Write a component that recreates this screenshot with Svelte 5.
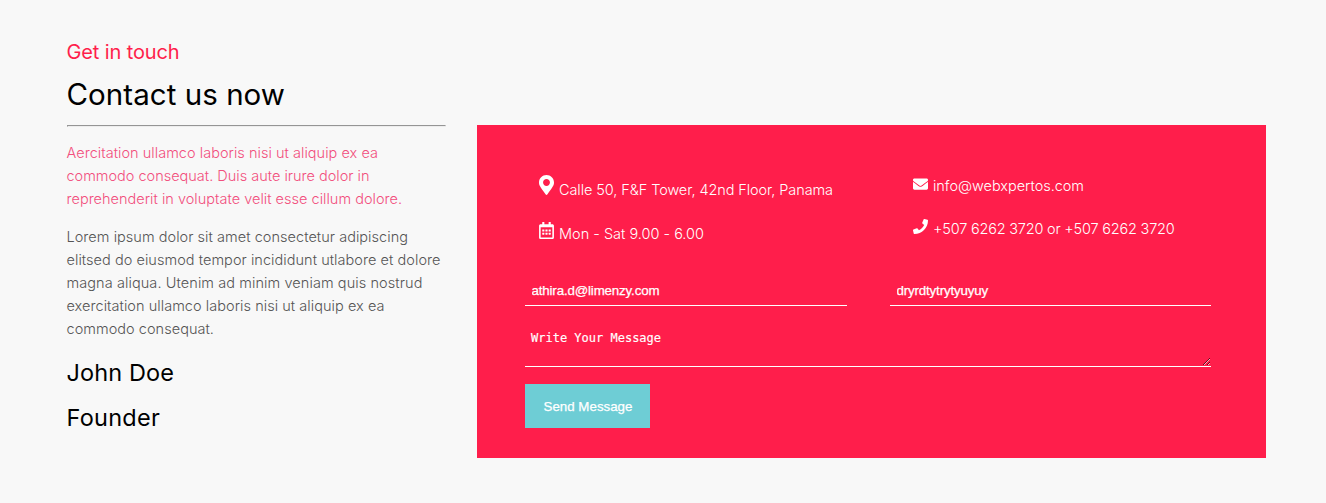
<script>
  const intro = [
    ['Aercitation ullamco laboris nisi ut aliquip ex ea', 311.5],
    ['commodo consequat. Duis aute irure dolor in', 303],
    ['reprehenderit in voluptate velit esse cillum dolore.', 335.5]
  ];
  const body = [
    ['Lorem ipsum dolor sit amet consectetur adipiscing', 341.5],
    ['elitsed do eiusmod tempor incididunt utlabore et dolore', 374],
    ['magna aliqua. Utenim ad minim veniam quis nostrud', 356],
    ['exercitation ullamco laboris nisi ut aliquip ex ea', 318],
    ['commodo consequat.', 147.5]
  ];

  // Tracks a line of text in or out so that it fills the given measure.
  function track(node, width) {
    const natural = node.getBoundingClientRect().width;
    node.style.letterSpacing = `${(width - natural) / node.textContent.length}px`;
  }
</script>

<main>
  <section class="about">
    <h4><span use:track={113}>Get in touch</span></h4>
    <h2><span use:track={218.5}>Contact us now</span></h2>
    <hr />
    <p class="intro">
      {#each intro as [text, width]}
        <span class="line"><span use:track={width}>{text}</span></span>
      {/each}
    </p>
    <p>
      {#each body as [text, width]}
        <span class="line"><span use:track={width}>{text}</span></span>
      {/each}
    </p>
    <h3><span use:track={107.5}>John Doe</span></h3>
    <h3><span use:track={93.5}>Founder</span></h3>
  </section>

  <section class="card">
    <div class="details">
      <div class="column">
        <div class="item place">
          <svg class="pin" viewBox="0 0 384 512"><path d="M172.268 501.67C26.97 291.031 0 269.413 0 192 0 85.961 85.961 0 192 0s192 85.961 192 192c0 77.413-26.97 99.031-172.268 309.67-9.535 13.774-29.93 13.773-39.464 0zM192 280c48.600 0 88-39.400 88-88s-39.400-88-88-88-88 39.400-88 88 39.400 88 88 88z" /></svg>
          <span use:track={274}>Calle 50, F&amp;F Tower, 42nd Floor, Panama</span>
        </div>
        <div class="item hours">
          <svg class="calendar" viewBox="0 0 448 512"><path d="M148 288h-40c-6.600 0-12-5.400-12-12v-40c0-6.600 5.400-12 12-12h40c6.600 0 12 5.400 12 12v40c0 6.600-5.400 12-12 12zm108-12v-40c0-6.600-5.400-12-12-12h-40c-6.600 0-12 5.400-12 12v40c0 6.600 5.400 12 12 12h40c6.600 0 12-5.400 12-12zm96 0v-40c0-6.600-5.400-12-12-12h-40c-6.600 0-12 5.400-12 12v40c0 6.600 5.400 12 12 12h40c6.600 0 12-5.400 12-12zm-96 96v-40c0-6.600-5.400-12-12-12h-40c-6.600 0-12 5.400-12 12v40c0 6.600 5.400 12 12 12h40c6.600 0 12-5.400 12-12zm-96 0v-40c0-6.600-5.400-12-12-12h-40c-6.600 0-12 5.400-12 12v40c0 6.600 5.400 12 12 12h40c6.600 0 12-5.400 12-12zm192 0v-40c0-6.600-5.400-12-12-12h-40c-6.600 0-12 5.400-12 12v40c0 6.600 5.400 12 12 12h40c6.600 0 12-5.400 12-12zm96-260v352c0 26.500-21.500 48-48 48H48c-26.500 0-48-21.500-48-48V112c0-26.500 21.500-48 48-48h48V12c0-6.600 5.400-12 12-12h40c6.600 0 12 5.400 12 12v52h128V12c0-6.600 5.400-12 12-12h40c6.600 0 12 5.400 12 12v52h48c26.500 0 48 21.500 48 48zm-48 346V160H48v298c0 3.300 2.700 6 6 6h340c3.300 0 6-2.700 6-6z" /></svg>
          <span use:track={145}>Mon - Sat 9.00 - 6.00</span>
        </div>
      </div>
      <div class="column">
        <div class="item mail">
          <svg class="envelope" viewBox="0 64 512 384"><path d="M502.300 190.800c3.900-3.100 9.700-.2 9.700 4.700V400c0 26.500-21.500 48-48 48H48c-26.500 0-48-21.500-48-48V195.600c0-5 5.700-7.800 9.700-4.700 22.400 17.400 52.100 39.500 154.100 113.600 21.100 15.400 56.700 47.800 92.200 47.600 35.700.3 72-32.800 92.300-47.600 102-74.100 131.600-96.300 154-113.700zM256 320c23.200.4 56.600-29.200 73.400-41.400 132.700-96.300 142.800-104.700 173.400-128.700 5.800-4.500 9.200-11.500 9.200-18.900v-19c0-26.500-21.500-48-48-48H48c-26.500 0-48 21.500-48 48v19c0 7.400 3.400 14.300 9.200 18.900 30.600 23.900 40.700 32.400 173.400 128.700 16.800 12.200 50.200 41.800 73.400 41.400z" /></svg>
          <span use:track={151}>info@webxpertos.com</span>
        </div>
        <div class="item call">
          <svg class="phone" viewBox="0 0 512 512"><path d="M493.400 24.600l-104-24c-11.300-2.600-22.900 3.300-27.500 13.900l-48 112c-4.200 9.800-1.400 21.300 6.900 28l60.600 49.600c-36 76.700-98.900 140.500-177.200 177.200l-49.600-60.600c-6.800-8.300-18.200-11.100-28-6.900l-112 48C3.900 366.500-2 378.100.6 389.400l24 104C27.100 504.200 36.700 512 48 512c256.100 0 464-207.500 464-464 0-11.200-7.700-20.900-18.600-23.400z" /></svg>
          <span use:track={241.5}>+507 6262 3720 or +507 6262 3720</span>
        </div>
      </div>
    </div>

    <form>
      <div class="fields">
        <input type="text" aria-label="Email" value="athira.d@limenzy.com" />
        <input type="text" aria-label="Name" value="dryrdtytrytyuyuy" />
      </div>
      <textarea placeholder="Write Your Message"></textarea>
      <button type="button">Send Message</button>
    </form>
  </section>
</main>

<style>
  :global(body) {
    margin: 0;
    background: #f8f8f8;
  }
  main {
    box-sizing: border-box;
    height: 503px;
    padding: 38px 60px 0 66.5px;
    display: flex;
    gap: 31px;
    background: #f8f8f8;
    font-family: Inter, Roboto, sans-serif;
    overflow: hidden;
  }
  .about {
    width: 379.5px;
    flex: none;
  }
  h2, h3, h4, p {
    margin: 0;
    white-space: nowrap;
    font-weight: 400;
    color: #000;
  }
  h4 {
    font-size: 20px;
    line-height: 28px;
    color: #ff1e4b;
  }
  h2 {
    margin-top: 9px;
    font-size: 29.5px;
    line-height: 38px;
  }
  hr {
    box-sizing: border-box;
    height: 2px;
    margin: 12px 0 14px;
    border: 1px solid;
    border-color: #959595 #ededed #ededed #959595;
  }
  p {
    margin-bottom: 15px;
    font-size: 14.5px;
    line-height: 23px;
    font-weight: 300;
    color: #555;
  }
  .intro {
    color: #f24f7d;
  }
  .line {
    display: block;
  }
  h3 {
    margin-bottom: 15px;
    font-size: 23.5px;
    line-height: 30px;
  }
  h3:nth-last-child(2) {
    margin-top: 18px;
  }
  .card {
    box-sizing: border-box;
    width: 789px;
    height: 333px;
    margin-top: 87px;
    padding: 48px 55px 30px 48px;
    background: #ff1e4b;
  }
  .details {
    display: grid;
    grid-template-columns: 374px 1fr;
    height: 102px;
    padding-left: 14px;
  }
  .item {
    display: flex;
    align-items: flex-start;
    gap: 5px;
    font-size: 14.5px;
    line-height: 23px;
    color: #fff;
    white-space: nowrap;
    font-weight: 300;
  }
  .place {
    padding-top: 5px;
  }
  .hours {
    padding-top: 21px;
  }
  .mail {
    padding-top: 1px;
  }
  .call {
    padding-top: 20px;
  }
  svg {
    display: block;
    flex: none;
    width: 15px;
    fill: #fff;
  }
  .pin {
    height: 20px;
    margin-top: -3px;
  }
  .calendar {
    height: 17px;
  }
  .envelope {
    height: 12px;
    margin-top: 4px;
  }
  .phone {
    height: 15px;
    margin-top: 2px;
  }
  .fields {
    display: grid;
    grid-template-columns: 322px 321px;
    gap: 43px;
  }
  input, textarea {
    box-sizing: border-box;
    width: 100%;
    border: 0;
    border-bottom: 1px solid #fff;
    border-radius: 0;
    outline: 0;
    background: transparent;
    color: #fff;
  }
  input {
    height: 31px;
    padding: 0 6px 0 6.5px;
    font: 13.333px 'Liberation Sans', Arial, sans-serif;
    letter-spacing: -0.16px;
    -webkit-text-stroke: 0.25px #fff;
  }
  textarea {
    display: block;
    height: 46px;
    margin: 15px 0 17px;
    padding: 10px 6px;
    font: 12px/14px 'DejaVu Sans Mono', monospace;
    -webkit-text-stroke: 0.15px #fff;
    overflow: hidden;
  }
  textarea::placeholder {
    color: #fff;
    opacity: 1;
  }
  button {
    display: block;
    width: 125px;
    height: 44px;
    padding: 0 0 0 1px;
    border: 0;
    background: #6ecdd5;
    color: #fff;
    font: 13.333px 'Liberation Sans', Arial, sans-serif;
    -webkit-text-stroke: 0.25px #fff;
  }
</style>
